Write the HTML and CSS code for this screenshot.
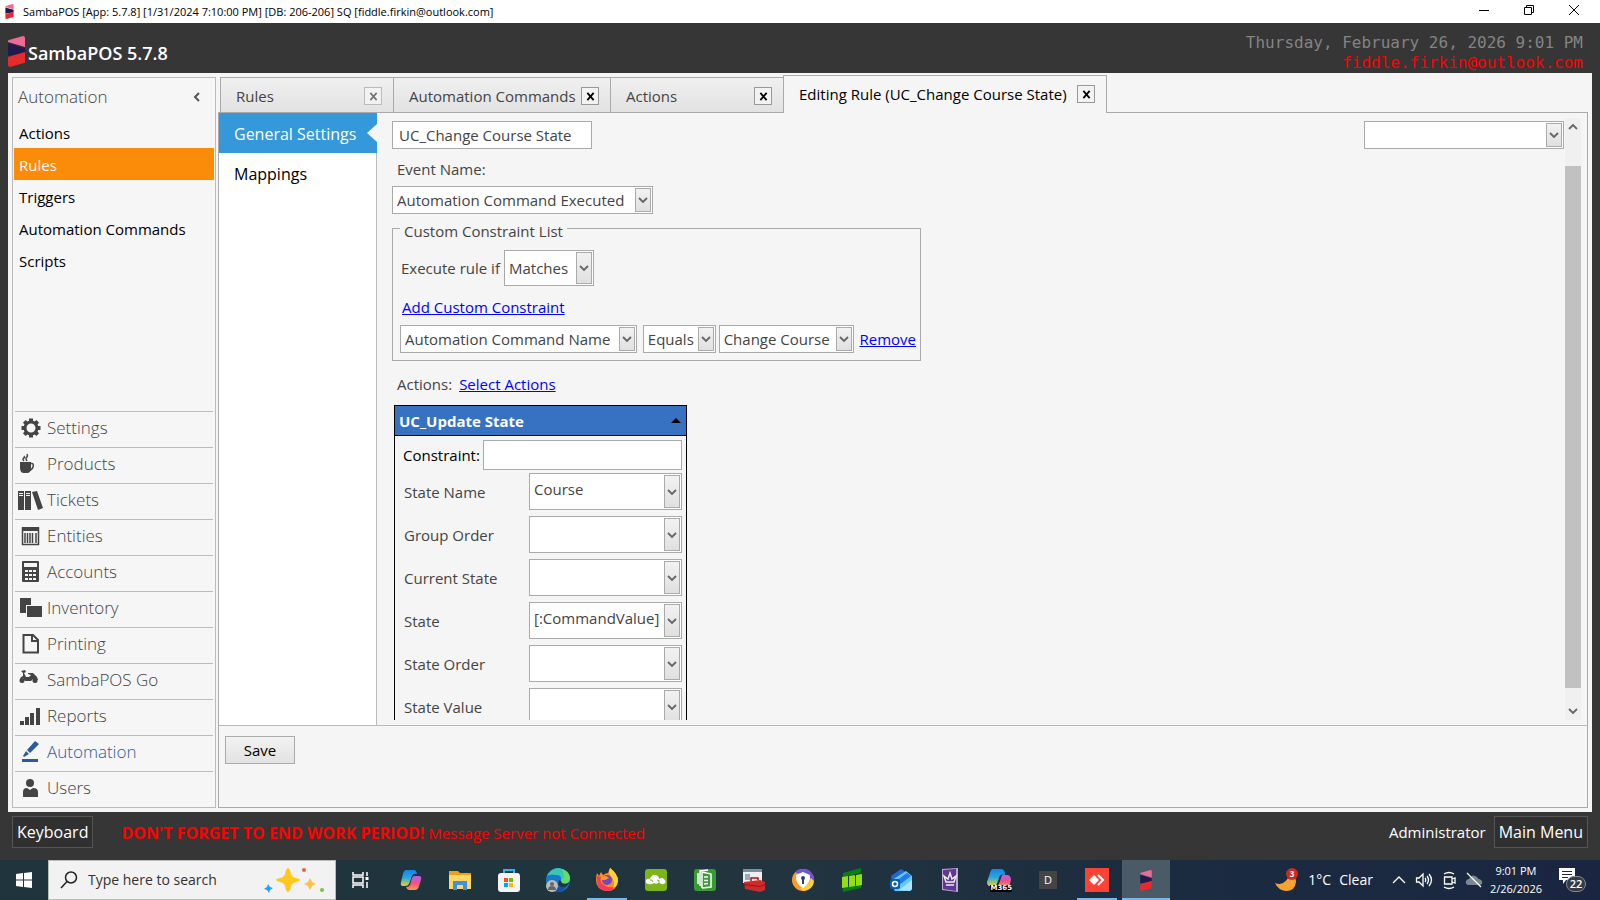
FILE: index.html
```html
<!DOCTYPE html>
<html lang="en">
<head>
<meta charset="utf-8">
<title>SambaPOS</title>
<link rel="stylesheet" href="styles.css">
</head>
<body>
<svg class="defs" width="0" height="0" aria-hidden="true">
  <symbol id="logo" viewBox="0 0 17 31"><path fill="#f06a96" d="M0 5Q0 4 1 4L15 0Q17 0 17 2V11L0 6Z"/><path fill="#231a4c" d="M0 7L17 12V17L0 20Z"/><path fill="#e62b2e" d="M0 21L17 16V26Q17 27 16 27L2 31Q0 31 0 29Z"/></symbol>
  <symbol id="down" viewBox="0 0 10 10"><path fill="none" stroke="#666" stroke-width="1.8" d="M1 3L5 7L9 3"/></symbol>
  <symbol id="up" viewBox="0 0 10 10"><path fill="none" stroke="#666" stroke-width="1.8" d="M1 7L5 3L9 7"/></symbol>
  <symbol id="x" viewBox="0 0 10 10"><path fill="none" stroke="currentColor" stroke-width="2" d="M1.500 1L8.500 9M8.500 1L1.500 9"/></symbol>
</svg>

<header class="titlebar">
  <svg class="title-logo"><use href="#logo"/></svg>
  <span class="title-text">SambaPOS [App: 5.7.8] [1/31/2024 7:10:00 PM] [DB: 206-206] SQ [fiddle.firkin@outlook.com]</span>
  <div class="window-buttons">
    <button aria-label="Minimize"><svg viewBox="0 0 12 12"><path d="M1 6.500H11"/></svg></button>
    <button aria-label="Restore"><svg viewBox="0 0 12 12"><path d="M1.500 3.500H8.500V10.500H1.500ZM3.500 3.500V1.500H10.500V8.500H8.500"/></svg></button>
    <button aria-label="Close"><svg viewBox="0 0 12 12"><path d="M1 1L11 11M11 1L1 11"/></svg></button>
  </div>
</header>

<div class="brandbar">
  <svg class="brand-logo"><use href="#logo"/></svg>
  <h1>SambaPOS 5.7.8</h1>
  <div class="stamp"><div>Thursday, February 26, 2026 9:01 PM</div><div class="account">fiddle.firkin@outlook.com</div></div>
</div>

<div class="workspace">
  <aside class="sidebar">
    <div class="side-head"><h2>Automation</h2><button class="collapse" aria-label="Collapse"><svg viewBox="0 0 10 10"><path d="M7 1L3 5L7 9"/></svg></button></div>
    <nav class="side-list">
      <a href="#">Actions</a><a href="#" class="selected">Rules</a><a href="#">Triggers</a><a href="#">Automation Commands</a><a href="#">Scripts</a>
    </nav>
    <nav class="modules">
      <a href="#"><svg viewBox="0 0 26 24"><circle cx="14" cy="12" r="6" fill="none" stroke="#444" stroke-width="3"/><path stroke="#444" stroke-width="4" d="M14 2.500V6M14 18V21.500M4.500 12H8M20 12H23.500M7.300 5.300L9.800 7.800M18.200 16.200L20.700 18.700M7.300 18.700L9.800 16.200M18.200 7.800L20.700 5.300"/></svg>Settings</a>
      <a href="#"><svg viewBox="0 0 26 24"><path fill="#444" d="M3 10H14V16Q14 21 10 21H7Q3 21 3 16Z"/><path fill="none" stroke="#444" stroke-width="1.500" d="M13 11.500H15Q17 12 16 15Q15 18 12 18.500M7 9Q5 7 7 6Q8 5 7 4M10 9Q8 6 10 5Q11 4 10 2"/></svg>Products</a>
      <a href="#"><svg viewBox="0 0 26 24"><path fill="#444" d="M1 3H7V22H1ZM8 3H14V22H8ZM15 4L20 3L26 20L21 22Z"/><path stroke="#f6f6f6" d="M2 5.500H6M2 7.500H6M9 5.500H13M9 7.500H13M7.500 3V22"/></svg>Tickets</a>
      <a href="#"><svg viewBox="0 0 26 24"><path fill="none" stroke="#444" stroke-width="1.500" d="M5.500 4H21.500V20.500H5.500Z"/><path fill="#444" d="M5 3H22V7H5Z"/><path stroke="#444" stroke-width="1.500" d="M8 9V19M10.500 9V19M13 9V19M15.500 9V19M19 9V19"/></svg>Entities</a>
      <a href="#"><svg viewBox="0 0 26 24"><rect x="5" y="1" width="17" height="21" rx="1" fill="#444"/><path fill="#f6f6f6" d="M7 3H20V7H7ZM8 10H11V12H8ZM12 10H15V12H12ZM16 10H19V12H16ZM8 14H11V16H8ZM12 14H15V16H12ZM16 14H19V16H16ZM8 18H11V20H8ZM12 18H15V20H12ZM16 18H19V20H16Z"/></svg>Accounts</a>
      <a href="#"><svg viewBox="0 0 26 24"><path fill="#444" d="M3 2H14V9H9V17H3ZM10 10H25V21H10Z"/></svg>Inventory</a>
      <a href="#"><svg viewBox="0 0 26 24"><path fill="none" stroke="#444" stroke-width="2" d="M6.500 3H16L21 8V20.500H6.500ZM15 3V9H21"/></svg>Printing</a>
      <a href="#"><svg viewBox="0 0 26 24"><circle cx="5" cy="12.500" r="2.500" fill="#444"/><circle cx="18" cy="12.500" r="2.500" fill="#444"/><path fill="#444" d="M4 3L8 2L9 4L7 5L9 9H12L14 7L11 6V5H16L18 7Q21 9 21 12L16 11L14 13H8L6 10L3 11Q3 9 6 8L6 5Z"/></svg>SambaPOS Go</a>
      <a href="#"><svg viewBox="0 0 26 24"><path fill="#444" d="M3 17H7V21H3ZM8 13H12V21H8ZM13 9H17V21H13ZM19 4H23V21H19Z"/></svg>Reports</a>
      <a href="#" class="current"><svg viewBox="0 0 26 24"><path fill="#2c5aa0" d="M18 1L22 4L13 13L10 10ZM9 11L12 14L7 17L6 16ZM5 19H21V22H5Z"/></svg>Automation</a>
      <a href="#"><svg viewBox="0 0 26 24"><circle cx="13" cy="7" r="4" fill="#444"/><path fill="#444" d="M6 21V16Q6 12 10 12L13 14L16 12Q21 12 21 16V21Z"/></svg>Users</a>
    </nav>
  </aside>

  <main class="main">
    <div class="tabs" role="tablist">
      <div class="tab"><a href="#" role="tab">Rules</a><button class="close faded" aria-label="Close Rules"><svg><use href="#x"/></svg></button></div>
      <div class="tab tab-wide"><a href="#" role="tab">Automation Commands</a><button class="close" aria-label="Close Automation Commands"><svg><use href="#x"/></svg></button></div>
      <div class="tab"><a href="#" role="tab">Actions</a><button class="close" aria-label="Close Actions"><svg><use href="#x"/></svg></button></div>
      <div class="tab tab-active"><a href="#" role="tab" aria-selected="true">Editing Rule (UC_Change Course State)</a><button class="close" aria-label="Close Editing Rule"><svg><use href="#x"/></svg></button></div>
    </div>
    <section class="page">
      <div class="editor">
        <nav class="sections"><a href="#" class="on">General Settings</a><a href="#">Mappings</a></nav>
        <div class="pane">
          <div class="form">
            <input class="name" aria-label="Rule name" value="UC_Change Course State">
            <label class="event-label" for="event">Event Name:</label>
            <span class="combo event"><select id="event"><option>Automation Command Executed</option></select><i><svg><use href="#down"/></svg></i></span>
            <fieldset class="constraints">
              <legend>Custom Constraint List</legend>
              <div class="match"><label for="match">Execute rule if</label><span class="combo tall match-combo"><select id="match"><option>Matches</option></select><i><svg><use href="#down"/></svg></i></span></div>
              <a href="#" class="add">Add Custom Constraint</a>
              <div class="constraint">
                <span class="combo c-name"><select aria-label="Field"><option>Automation Command Name</option></select><i><svg><use href="#down"/></svg></i></span>
                <span class="combo c-op"><select aria-label="Operator"><option>Equals</option></select><i><svg><use href="#down"/></svg></i></span>
                <span class="combo c-value"><select aria-label="Value"><option>Change Course</option></select><i><svg><use href="#down"/></svg></i></span>
                <a href="#">Remove</a>
              </div>
            </fieldset>
            <div class="actions-line"><span>Actions:</span><a href="#">Select Actions</a></div>
            <article class="action">
              <header><h3>UC_Update State</h3><button aria-label="Collapse action"><svg viewBox="0 0 10 5"><path d="M0 5L5 0L10 5Z"/></svg></button></header>
              <div class="constraint-line"><label for="constraint">Constraint:</label><input id="constraint"></div>
              <div class="field"><label for="f1">State Name</label><span class="combo tall"><select id="f1"><option>Course</option></select><i><svg><use href="#down"/></svg></i></span></div>
              <div class="field"><label for="f2">Group Order</label><span class="combo tall"><select id="f2"><option></option></select><i><svg><use href="#down"/></svg></i></span></div>
              <div class="field"><label for="f3">Current State</label><span class="combo tall"><select id="f3"><option></option></select><i><svg><use href="#down"/></svg></i></span></div>
              <div class="field"><label for="f4">State</label><span class="combo tall"><select id="f4"><option>[:CommandValue]</option></select><i><svg><use href="#down"/></svg></i></span></div>
              <div class="field"><label for="f5">State Order</label><span class="combo tall"><select id="f5"><option></option></select><i><svg><use href="#down"/></svg></i></span></div>
              <div class="field"><label for="f6">State Value</label><span class="combo tall"><select id="f6"><option></option></select><i><svg><use href="#down"/></svg></i></span></div>
            </article>
          </div>
          <span class="combo group"><select aria-label="Group"><option></option></select><i><svg><use href="#down"/></svg></i></span>
          <div class="scroll"><svg><use href="#up"/></svg><div class="track"><div class="thumb"></div></div><svg><use href="#down"/></svg></div>
        </div>
      </div>
      <footer class="page-foot"><button class="save">Save</button></footer>
    </section>
  </main>
</div>

<div class="statusbar">
  <button class="dark">Keyboard</button>
  <p><strong>DON'T FORGET TO END WORK PERIOD!</strong> Message Server not Connected</p>
  <span class="user">Administrator</span>
  <button class="dark">Main Menu</button>
</div>

<div class="taskbar">
  <button class="start" aria-label="Start"><svg viewBox="0 0 16 16"><path fill="#fff" d="M0 2L7 1V7.500H0ZM8 1L16 0V7.500H8ZM0 8.500H7V15L0 14ZM8 8.500H16V16L8 15Z"/></svg></button>
  <div class="search">
    <svg class="glass" viewBox="0 0 18 18"><circle cx="11" cy="6.500" r="5.500"/><path d="M7 10.500L1 17"/></svg>
    <input aria-label="Search" placeholder="Type here to search">
    <svg class="sparks" viewBox="0 0 62 28"><path fill="#ffc81e" d="M24 2Q26 2 27 8Q28 11 32 12Q36 13 36 14Q36 15 32 16Q28 17 27 20Q26 26 24 26Q22 26 21 20Q20 17 16 16Q12 15 12 14Q12 13 16 12Q20 11 21 8Q22 2 24 2Z"/><path fill="#ffc04a" d="M46 12L48 16L52 18L48 20L46 24L44 20L40 18L44 16Z"/><path fill="#1ca4f0" d="M4 18L6 21L9 22L6 24L5 27L3 24L0 23L3 21Z"/><circle cx="40" cy="4" r="2" fill="#f0622c"/><circle cx="58" cy="24" r="2" fill="#7cc242"/></svg>
  </div>
  <div class="apps">
    <button class="taskview" aria-label="Task View"><svg viewBox="0 0 24 24"><path fill="none" stroke="#fff" stroke-width="1.500" d="M5 4V7H15V4M5 20V17H15V20M5 9H15V15H5ZM19 4V8M19 14V20"/><path fill="#fff" d="M17.500 9H20.500V12H17.500Z"/></svg></button>
    <button aria-label="Copilot"><svg viewBox="0 0 24 24"><defs><linearGradient id="g1" x2="0" y2="1"><stop stop-color="#1681ea"/><stop offset=".5" stop-color="#29a9e0"/><stop offset="1" stop-color="#f2d024"/></linearGradient><linearGradient id="g2" x2="0" y2="1"><stop stop-color="#b45ff0"/><stop offset=".5" stop-color="#f04f8d"/><stop offset="1" stop-color="#fb9a45"/></linearGradient></defs><path fill="url(#g1)" d="M7 2H15Q17 2 18 6Q14 5 13 8L10 16Q9 18 6 18H4Q1 18 2 14L4 6Q5 2 7 2Z"/><path fill="url(#g2)" d="M15 8H20Q23 8 22 12L20 18Q19 22 16 22H10Q8 22 7 19Q10 19 11 17L13 10Q14 8 15 8Z"/></svg></button>
    <button aria-label="File Explorer"><svg viewBox="0 0 24 24"><path fill="#e8a317" d="M1 3H10L12 5H23V8H1Z"/><path fill="#ffd765" d="M1 7H23V21H1Z"/><path fill="#3f92dd" d="M5 13H19V22H15V17H9V22H5Z"/></svg></button>
    <button aria-label="Microsoft Store"><svg viewBox="0 0 24 24"><path fill="none" stroke="#31b5ee" stroke-width="2" d="M7 6V2H17V6"/><rect x="1" y="5" width="22" height="19" rx="3" fill="#f4f4f4"/><path fill="#f25022" d="M7 10H11V14H7Z"/><path fill="#7fba00" d="M12 10H16V14H12Z"/><path fill="#00a4ef" d="M7 15H11V19H7Z"/><path fill="#ffb900" d="M12 15H16V19H12Z"/></svg></button>
    <button aria-label="Edge"><svg viewBox="0 0 24 24"><circle cx="12" cy="12" r="12" fill="#1679cf"/><path fill="#37c6b0" d="M1 8Q5 0 13 0Q24 2 24 11Q23 16 17 16Q13 15 15 12Q16 7 10 7Q4 6 1 8Z"/><path fill="#65da68" d="M16 1Q24 4 24 11Q23 16 17 16Q14 15 15 13Q20 9 16 1Z"/><path fill="#22363f" d="M16 15Q20 17 24 14L21 18Q16 21 12 17L13 12Q15 12 16 15Z"/><path fill="#0f55a5" d="M8 11Q6 20 20 19Q17 24 11 24Q2 21 8 11Z"/><circle cx="6" cy="18" r="6" fill="#bbb"/><circle cx="6" cy="16" r="2" fill="#666"/><path fill="#666" d="M2 22Q2 18 6 18Q10 18 10 22Z"/></svg></button>
    <button class="running" aria-label="Firefox"><svg viewBox="0 0 24 24"><path fill="#ff8b21" d="M2 5L4 8L6 4L8 7Q11 5 13 5L15 0Q23 6 23 13Q22 23 12 23Q1 22 1 12Q1 8 2 5Z"/><path fill="#f83b5d" d="M2 8Q1 23 12 23Q18 23 21 18Q14 21 9 17Q4 14 6 9Z"/><path fill="#ffd43b" d="M15 0Q23 6 23 13Q22 19 18 20Q21 14 16 8Q13 5 15 0Z"/><circle cx="12" cy="12" r="5" fill="#7446c4"/><path fill="#ff9b20" d="M6 9L11 8L14 10L10 12L7 12Z"/></svg></button>
    <button aria-label="Cloud"><svg viewBox="0 0 24 24"><rect x="1" y="1" width="22" height="22" rx="3" fill="#7cb518"/><path fill="#fff" d="M4 16Q1 15 2 12Q4 10 6 11Q8 6 12 7Q15 8 15 11Q18 9 20 11Q23 14 20 16Q17 17 15 14Q13 17 10 15Q7 17 4 16Z"/><path fill="none" stroke="#7cb518" d="M6 12Q8 11 9 14M13 12Q16 12 15 14"/></svg></button>
    <button aria-label="Documents"><svg viewBox="0 0 24 24"><rect x="1" y="1" width="22" height="22" rx="3" fill="#3a9a36"/><path fill="none" stroke="#fff" stroke-width="1.500" d="M9 20V4L18 6V19L9 20M7 18V3L15 2M5 16V5M11 9L15 9M11 12.500L15 12.500M11 16L15 15.500"/></svg></button>
    <button aria-label="Admin Tools"><svg viewBox="0 0 24 24"><path fill="#eee" d="M1 1H20V15H1Z"/><path fill="#7b8ca0" d="M1 1H20V4H1Z"/><path fill="#9ab" d="M3 6H8V12H3Z"/><path fill="none" stroke="#a11" stroke-width="1.500" d="M9 13V10H16V12"/><path fill="#d02b2b" d="M2 14L18 12L23 14V22L18 24L3 21Z"/><path fill="#8f1717" d="M2 16L18 18L23 16V17L18 19L2 17Z"/></svg></button>
    <button aria-label="Secure Browser"><svg viewBox="0 0 24 24"><circle cx="12" cy="12" r="11" fill="#ff9b2a"/><path fill="#7451d8" d="M5 3Q12 -1 19 3Q24 8 23 14Q17 6 5 5Z"/><path fill="#ffd12e" d="M23 13Q22 22 12 23L9 20Q18 19 20 10Z"/><path fill="#fff" d="M12 4L19 7Q20 15 12 20Q4 16 5 7Z"/><circle cx="12" cy="10" r="2" fill="#284273"/><path fill="#284273" d="M11 11H13V16H11Z"/></svg></button>
    <button aria-label="Green Panels"><svg viewBox="0 0 24 24"><path fill="#087f13" d="M3 5L21 0V5L3 9ZM3 19L21 16V20L3 24Z"/><path fill="#92df12" d="M2 9L8 8V19L2 20ZM9 8L15 7V18L9 19ZM16 7L22 6V17L16 18Z"/></svg></button>
    <button aria-label="Outlook"><svg viewBox="0 0 24 24"><path fill="#2168d6" d="M2 8L12 1L23 8V21Q23 23 20 23H5Z"/><path fill="#61c9ff" d="M3 12L17 3L23 8V20L16 23H6Z"/><path fill="#2478e8" d="M7 13L18 5L22 8L10 17Z"/><path fill="#a6e7ff" d="M10 22L23 12V21Q22 23 20 23Z"/><rect x="1" y="11" width="10" height="10" rx="2" fill="#075bb5"/><circle cx="6" cy="16" r="2.500" fill="none" stroke="#fff" stroke-width="1.500"/></svg></button>
    <button aria-label="Solitaire"><svg viewBox="0 0 24 24"><path fill="#bda7d3" d="M4 1L20 0V24L4 22Z"/><path fill="#623693" d="M5 2L18 1V23L5 21Z"/><path fill="none" stroke="#eee" stroke-width="1.500" d="M8 14L6 8L10 11L12 5L14 11L18 8L16 14ZM8 17H16"/></svg></button>
    <button class="copilot365" aria-label="Microsoft 365"><svg viewBox="0 0 24 24"><path fill="url(#g1)" d="M6 1H15Q18 2 18 7Q13 5 12 10L9 18H3Q0 18 0 14L3 5Q4 1 6 1Z"/><path fill="url(#g2)" d="M15 7H21Q24 8 24 12L22 19H11Z"/></svg><span>M365</span></button>
    <button aria-label="D"><span class="letter">D</span></button>
    <button class="running" aria-label="AnyDesk"><svg viewBox="0 0 24 24"><path fill="#fa4335" d="M0 0H24V24H0Z"/><path fill="#fff" d="M4 12L9 7L14 12L9 17Z"/><path fill="none" stroke="#fff" stroke-width="2" d="M13 7L18 12L13 17"/></svg></button>
    <button class="active" aria-label="SambaPOS"><svg viewBox="0 0 24 24"><use href="#logo" x="6" y="2" width="12" height="21"/></svg></button>
  </div>
  <div class="tray">
    <button class="weather"><svg viewBox="0 0 26 24"><path fill="#f7a331" d="M1 15Q11 19 16 6Q22 9 22 14Q21 23 12 23Q4 22 1 15Z"/><circle cx="18" cy="6" r="6" fill="#c92b20"/><text x="18" y="9" text-anchor="middle">3</text></svg><span>1°C</span><span>Clear</span></button>
    <svg class="t-icon" viewBox="0 0 18 20"><path d="M3 13L9 7L15 13"/></svg>
    <svg class="t-icon" viewBox="0 0 18 20"><path d="M1.500 8H4L8 4V16L4 12H1.500ZM10 8Q11.500 10 10 12M12 6Q15 10 12 14M14 4Q19 10 14 16"/></svg>
    <svg class="t-icon" viewBox="0 0 18 20"><path d="M4 4Q9 1 14 4M4 17Q9 20 14 17M4.500 7H12V14H4.500ZM12 9L15 8V13L12 12"/></svg>
    <svg class="t-icon" viewBox="0 0 18 20"><path fill="#7d8790" stroke="none" d="M4 15Q0 15 1 11Q2 9 4 9Q7 3 12 7Q13 9 14 9Q18 10 17 14Q16 15 14 15Z"/><path d="M2 3L16 17"/></svg>
    <div class="clock"><div>9:01 PM</div><div>2/26/2026</div></div>
    <div class="notes"><svg viewBox="0 0 16 16"><path fill="#fff" d="M0 0H16V12H7L4 16V12H0Z"/><path stroke="#1a2941" d="M3 3.500H13M3 6.500H13M3 9.500H9"/></svg><b>22</b></div>
  </div>
</div>
</body>
</html>
```

FILE: styles.css
```css
* { box-sizing: border-box; }
body {
  margin: 0;
  min-height: 100vh;
  display: flex;
  flex-direction: column;
  background: #363636;
  color: #444;
  font: 15px/20px "Open Sans", "Noto Sans", sans-serif;
}
button, input, select { font: inherit; color: inherit; border-radius: 0; margin: 0; }
button { padding: 0; border: 0; background: none; }
a { color: #00f; }
h1, h2, h3, p { margin: 0; font-weight: 400; }
svg { display: block; flex: none; }
.defs { position: absolute; }

.titlebar { height: 23px; background: #fff; color: #000; display: flex; align-items: center; font-size: 11px; }
.title-logo { width: 9px; height: 15px; margin-left: 5px; }
.title-text { margin-left: 9px; flex: 1; }
.window-buttons { display: flex; align-self: stretch; margin-right: 4px; padding-bottom: 3px; }
.window-buttons button { width: 45px; display: grid; place-items: center; }
.window-buttons svg { width: 12px; height: 12px; fill: none; stroke: #000; }

.brandbar { height: 50px; display: flex; align-items: center; padding: 0 17px 0 8px; }
.brand-logo { width: 17px; height: 31px; margin-top: 6px; }
h1 { margin-left: 3px; padding-top: 10px; color: #fff; font-size: 18px; font-weight: 600; flex: 1; }
.stamp { font: 16px/20px "DejaVu Sans Mono", monospace; color: #848484; text-align: right; padding-top: 10px; }
.account { color: #f00; }

.workspace { flex: 1; margin: 0 8px; padding: 4px; background: #f5f5f5; display: flex; min-height: 0; }
.sidebar { width: 204px; border: 1px solid #bbb; background: #f6f6f6; display: flex; flex-direction: column; }
.side-head { height: 38px; display: flex; align-items: center; padding: 0 13px 0 5px; }
h2 { flex: 1; font-size: 17px; font-weight: 300; }
.collapse svg { width: 10px; height: 10px; fill: none; stroke: #555; stroke-width: 2; }
.side-list { flex: 1; padding: 0 1px; }
.side-list a { display: flex; align-items: center; height: 32px; padding: 2px 0 0 5px; color: #000; text-decoration: none; }
.side-list .selected { background: #fa8c0a; color: #fff; }
.modules { padding: 0 2px; }
.modules a { height: 36px; border-top: 1px solid #bbb; display: flex; align-items: center; gap: 4px; padding: 0 0 4px 2px; color: #444; text-decoration: none; font-size: 17px; font-weight: 300; }
.modules svg { width: 26px; height: 24px; }
.modules .current { color: #2c5aa0; }

.main { flex: 1; min-width: 0; margin-left: 2px; display: flex; flex-direction: column; }
.tabs { display: flex; align-items: flex-end; height: 36px; padding-left: 2px; z-index: 1; }
.tab { width: 173px; height: 36px; border: 1px solid #aaa; border-right: 0; background: linear-gradient(#f0f0f0, #e2e2e2); display: flex; align-items: center; justify-content: space-between; padding: 2px 11px 0 15px; }
.tab a { color: #444; text-decoration: none; white-space: nowrap; }
.tab-wide { width: 217px; }
.tab-active { width: 324px; height: 38px; border-right: 1px solid #aaa; border-bottom: 0; background: #f5f5f5; padding-bottom: 3px; }
.tab-active a { color: #000; }
.close { width: 18px; height: 18px; flex: none; border: 1px solid #999; color: #000; display: grid; place-items: center; background: #f2f2f2; }
.close svg { width: 9px; height: 9px; }
.faded { color: #777; border-color: #bbb; }
.page { flex: 1; min-height: 0; margin-top: -1px; border: 1px solid #aaa; display: flex; flex-direction: column; }
.editor { flex: 1; min-height: 0; display: flex; }
.sections { width: 158px; background: #fff; border-right: 1px solid #bbb; font-size: 16px; }
.sections a { display: flex; align-items: center; height: 40px; padding: 2px 0 0 15px; color: #000; text-decoration: none; white-space: nowrap; }
.sections .on { position: relative; background: #3498db; color: #fff; margin-right: -1px; }
.sections .on::after { content: ""; position: absolute; right: 0; top: 11px; border: 9px solid transparent; border-left: 0; border-right: 10px solid #f5f5f5; }
.pane { flex: 1; min-width: 0; display: flex; align-items: flex-start; padding: 5px 6px 5px 15px; overflow: hidden; contain: size; align-self: stretch; }
.form { flex: 1; align-self: stretch; overflow: hidden; padding-top: 3px; display: flex; flex-direction: column; align-items: flex-start; }
.form > * { flex: none; }
.form input { border: 1px solid #aaa; background: #fff; height: 28px; padding: 0 6px; }
.name { width: 200px; }
.event-label { margin: 10px 0 7px 5px; }
.combo { display: grid; height: 28px; border: 1px solid #aaa; background: #fff; }
.combo select { grid-area: 1 / 1; appearance: none; border: 0; background: none; padding: 0 17px 0 4px; width: 100%; outline: none; }
.combo i { grid-area: 1 / 1; justify-self: end; width: 16px; margin: 1px; border: 1px solid #aaa; background: linear-gradient(#f2f2f2, #e0e0e0); display: grid; place-items: center; pointer-events: none; }
.combo i svg { width: 10px; height: 10px; }
.event { width: 261px; }
.constraints { width: 529px; margin: 1px 0 0; padding: 0 4px 7px 7px; border: 1px solid #aaa; }
.constraints legend { padding: 6px 4px 0; }
.match { display: flex; align-items: center; justify-content: space-between; width: 194px; margin-top: 9px; padding-left: 1px; white-space: nowrap; }
.match-combo { width: 90px; }
.tall { height: 36px; }
.add { display: block; margin: 11px 0 8px 2px; width: max-content; }
.constraint { display: flex; align-items: center; justify-content: space-between; }
.c-name { width: 237px; margin-right: 3px; }
.c-op { width: 73px; }
.c-value { width: 135px; margin-right: 3px; }
.actions-line { display: flex; gap: 7px; margin: 13px 0 11px 5px; }
.action { width: 293px; margin-left: 2px; border: 1px solid #000; padding-bottom: 6px; }
.action header { height: 30px; background: #3671c2; border-bottom: 1px solid #000; display: flex; align-items: center; justify-content: space-between; padding: 0 5px 0 4px; }
h3 { color: #fff; font-size: 15px; font-weight: 700; }
.action header svg { width: 10px; height: 5px; }
.constraint-line { display: flex; align-items: center; justify-content: space-between; padding: 4px 4px 3px 8px; color: #000; }
.form .constraint-line input { width: 199px; height: 30px; }
.field { display: flex; align-items: center; justify-content: space-between; padding: 0 4px 0 9px; margin-bottom: 6px; }
.field .combo { width: 153px; height: 37px; }
.field select { padding-bottom: 5px; }
.group { width: 200px; margin: 3px 1px 0 0; }
.scroll { align-self: stretch; width: 16px; background: #f0f0f0; display: flex; flex-direction: column; align-items: center; padding: 4px 0 4px; }
.scroll svg { width: 10px; height: 10px; }
.track { flex: 1; width: 100%; padding: 34px 0 18px; }
.thumb { height: 100%; background: #c1c1c1; }
.page-foot { height: 82px; border-top: 1px solid #bbb; padding: 10px 6px; }
.save { width: 70px; height: 28px; border: 1px solid #aaa; background: linear-gradient(#f2f2f2, #e2e2e2); color: #000; }

.statusbar { height: 48px; display: flex; align-items: center; padding: 0 12px 8px; color: #fff; }
.statusbar p { margin-left: 28px; flex: 1; color: #f00; padding-top: 2px; }
.statusbar strong { font-size: 16px; }
.dark { height: 32px; padding: 0 4px; border: 1px solid #555; background: #303030; font-size: 16px; }
.user { margin-right: 8px; }

.taskbar { height: 40px; display: flex; background: linear-gradient(90deg, #20343d, #21343f 50%, #1b2b40 75%, #1a2641); color: #fff; }
.start { width: 48px; display: grid; place-items: center; }
.start svg { width: 16px; height: 16px; }
.search { width: 288px; background: #f2f2f2; border: 1px solid #bbb; display: flex; align-items: center; padding: 0 9px 0 11px; }
.glass { width: 18px; height: 18px; fill: none; stroke: #222; stroke-width: 1.5; }
.search input { flex: 1; min-width: 0; border: 0; background: none; padding: 0 0 0 10px; font-size: 14px; }
.search input::placeholder { color: #333; opacity: 1; }
.sparks { width: 62px; height: 28px; }
.apps { display: flex; gap: 1px; }
.apps button { width: 48px; display: grid; place-items: center; position: relative; }
.apps .taskview { margin-right: 2px; }
.apps svg { width: 24px; height: 24px; }
.running::after, .active::after { content: ""; position: absolute; left: 4px; right: 4px; bottom: 0; height: 2px; background: #76b9ed; }
.active { background: #4a5a67; }
.apps .active::after { left: 0; right: 0; }
.copilot365 span { position: absolute; bottom: 8px; right: 11px; background: #000; font: 700 7px/7px "DejaVu Sans", sans-serif; }
.letter { width: 18px; height: 18px; background: #444; font-size: 11px; line-height: 18px; }
.tray { margin-left: auto; display: flex; align-items: center; gap: 7px; padding-right: 14px; }
.weather { display: flex; align-items: center; gap: 8px; font-size: 14px; margin-right: 10px; }
.weather svg { width: 26px; height: 24px; }
.weather text { font: 700 8px "Open Sans", sans-serif; fill: #fff; }
.t-icon { width: 18px; height: 20px; fill: none; stroke: #fff; stroke-width: 1.3; }
.clock { font-size: 11px; line-height: 18px; text-align: center; white-space: nowrap; }
.notes { position: relative; width: 27px; height: 24px; margin-left: 10px; }
.notes svg { width: 16px; height: 16px; }
.notes b { position: absolute; right: 0; bottom: 0; width: 20px; height: 16px; border: 1px solid #888; border-radius: 8px; background: #343b45; font: 600 11px/14px "Open Sans", sans-serif; text-align: center; }
```
